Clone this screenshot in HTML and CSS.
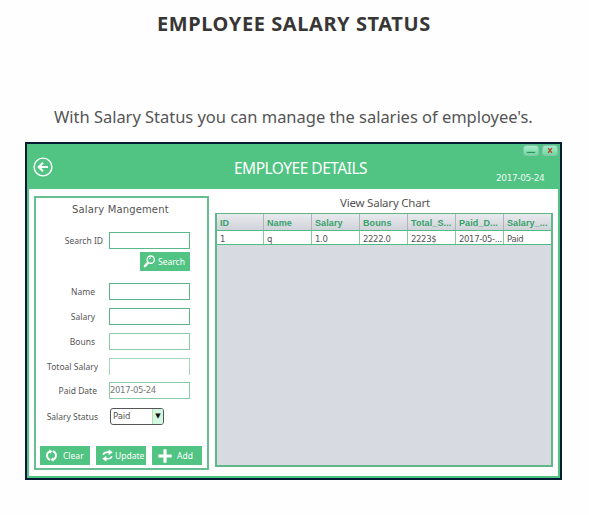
FILE: index.html
```html
<!DOCTYPE html>
<html lang="en">
<head>
<meta charset="utf-8">
<title>Employee Salary Status</title>
<link rel="stylesheet" href="styles.css">
</head>
<body>
<h1><span>EMPLOYEE SALARY STATUS</span></h1>
<p class="intro"><span>With Salary Status you can manage the salaries of employee's.</span></p>
<main class="window">
  <header class="bar">
    <svg class="back" viewBox="0 0 20 20"><circle cx="10" cy="10" r="8.9" fill="none" stroke="#fff" stroke-width="1.4"/><path d="M15 10H6M10 5.8L5.7 10l4.3 4.2" fill="none" stroke="#fff" stroke-width="2"/></svg>
    <h2><span>EMPLOYEE DETAILS</span></h2>
    <div class="side">
      <div class="controls">
        <svg viewBox="0 0 15 9"><path d="M3 6.5h9" stroke="#28764f" stroke-width="1"/></svg>
        <svg viewBox="0 0 15 9"><path d="M5.5 2l4 5M9.5 2l-4 5" stroke="#b8432f" stroke-width="1.5"/></svg>
      </div>
      <div class="date"><span>2017-05-24</span></div>
    </div>
  </header>
  <div class="content">
    <section class="form">
      <h3><span>Salary Mangement</span></h3>
      <div class="row search-row"><label class="l-search"><span>Search ID</span></label><div class="field"></div></div>
      <button class="btn search"><svg viewBox="0 0 14 14"><circle cx="8.3" cy="5" r="3.9" fill="none" stroke="#fff" stroke-width="1.4"/><path d="M6.7 4.6a2 2 0 0 1 1.8-1.6" fill="none" stroke="#fff"/><path d="M5.3 8.5L2 12" stroke="#fff" stroke-width="2.6" stroke-linecap="round"/></svg><span>Search</span></button>
      <div class="row r-name"><label class="l-short"><span>Name</span></label><div class="field"></div></div>
      <div class="row"><label class="l-short"><span>Salary</span></label><div class="field"></div></div>
      <div class="row"><label class="l-short"><span>Bouns</span></label><div class="field light"></div></div>
      <div class="row"><label class="l-long"><span>Totoal Salary</span></label><div class="field open"></div></div>
      <div class="row r-date"><label class="l-date"><span>Paid Date</span></label><div class="field light"><span>2017-05-24</span></div></div>
      <div class="row r-status"><label class="l-long"><span>Salary Status</span></label><div class="select"><span>Paid</span><i>▼</i></div></div>
      <div class="actions">
        <button class="btn"><svg viewBox="0 0 14 14"><path d="M5.6 11.7A4.9 4.9 0 0 1 5.2 2.5M8.4 2.3A4.9 4.9 0 0 1 8.8 11.5" fill="none" stroke="#fff" stroke-width="2"/><path d="M4.6.2L8 2.3 5.4 5zM9.4 13.8L6 11.7 8.6 9z" fill="#fff"/></svg><span>Clear</span></button>
        <button class="btn upd"><svg viewBox="0 0 14 14"><path d="M2.5 6.3C2.8 3.7 5 3.3 9 3.5M11.5 7.8C11.2 10.3 9 10.7 5 10.5" fill="none" stroke="#fff" stroke-width="1.9"/><path d="M8.2.5l4.5 3-4.5 3.2zM5.8 13.5l-4.5-3 4.5-3.2z" fill="#fff"/></svg><span>Update</span></button>
        <button class="btn add"><svg viewBox="0 0 14 14"><path d="M7 .3v13.4M.3 7h13.4" stroke="#fff" stroke-width="3.2"/></svg><span>Add</span></button>
      </div>
    </section>
    <section class="chart">
      <h3><span>View Salary Chart</span></h3>
      <div class="table">
        <div class="tr head"><b>ID</b><b>Name</b><b>Salary</b><b>Bouns</b><b>Total_S...</b><b>Paid_D...</b><b>Salary_...</b></div>
        <div class="tr"><span>1</span><span>q</span><span>1.0</span><span>2222.0</span><span>2223$</span><span>2017-05-...</span><span>Paid</span></div>
      </div>
    </section>
  </div>
</main>
</body>
</html>
```
FILE: styles.css
```css
* { box-sizing: border-box; }
body { margin: 0; height: 515px; overflow: hidden; background: #fefefe; color: #555; font-family: "Noto Sans", sans-serif; }
h1, h2, h3, p { margin: 0; font-weight: 400; white-space: nowrap; }
h1 { height: 48px; padding-left: 157px; font-size: 20px; line-height: 48px; font-weight: 700; color: #383635; letter-spacing: .58px; }
.intro { height: 94px; padding: 56px 0 0 54px; font-size: 16.5px; line-height: 26px; color: #555; letter-spacing: -.03px; }
.window { width: 537px; height: 338px; margin-left: 25px; border: 2px solid #041b33; background: #51c383; padding: 0 2px 2px; display: flex; flex-direction: column; }
.bar { height: 45px; flex: none; display: flex; color: #fff; }
.back { width: 20px; height: 20px; margin: 13px 0 0 4px; }
h2 { margin-left: 181px; font-size: 15.5px; line-height: 49px; width: 134px; letter-spacing: -.5px; }
.side { margin-left: auto; width: 66px; }
.controls { display: flex; gap: 3px; margin: 1px 0 0 31px; width: 35px; }
.controls svg { width: 16px; height: 11px; border-radius: 3px; background: linear-gradient(#a7eacb, #6cdb9d); border: 1px solid #8bbfb0; }
.date { font: 9px/16px "DejaVu Sans", sans-serif; margin: 14px 0 0 4px; letter-spacing: -.4px; white-space: nowrap; color: #e9faef; }
.content { flex: 1; background: #fff; display: flex; padding: 7px 5px 0; }
.form { width: 175px; height: 274px; border: 2px solid #66be91; padding: 0 4px; }
.form h3 { font: 10px/20px "DejaVu Sans", sans-serif; padding: 2px 0 0 32px; height: 34px; letter-spacing: .15px; }
.row { display: flex; height: 17px; margin-bottom: 8px; align-items: center; }
.search-row { margin-bottom: 3px; }
label { width: 69px; flex: none; text-align: right; font-size: 8.5px; line-height: 17px; white-space: nowrap; }
.l-search { padding-right: 6px; }
.l-short { padding-right: 14px; }
.l-long { padding-right: 11px; }
.l-date { padding-right: 12px; }
.field { width: 81px; height: 17px; border: 1px solid #5bb68a; background: #fff; color: #777; font: 8.5px/15px "DejaVu Sans", sans-serif; letter-spacing: -.35px; }
.light { border-color: #8ccbaa; }
.open { border-color: #a3d6bb; border-bottom: 0; }
.btn { display: flex; align-items: center; width: 50px; height: 19px; border: 0; padding: 0 0 0 5px; background: #51c383; color: #fff; font: 8.5px/19px "Noto Sans", sans-serif; white-space: nowrap; }
.btn svg { width: 13px; height: 13px; flex: none; margin-right: 5px; }
.search { margin-left: 100px; padding-left: 3px; }
.search svg { margin-right: 2px; }
.r-name { margin-top: 12px; }
.r-date { margin-top: -1px; }
.r-status { height: 18px; margin-bottom: 21px; margin-top: 8px; }
.select { width: 54px; height: 17px; margin-left: 1px; border: 1px solid #555; border-radius: 3px; display: flex; justify-content: space-between; font: 8.5px/15px "DejaVu Sans", sans-serif; padding-left: 2px; overflow: hidden; letter-spacing: -.1px; }
.select i { width: 11px; background: #d4f8df; border-left: 1px solid #b1dcc0; color: #111; font-style: normal; font-size: 7px; text-align: center; }
.actions { display: flex; gap: 6px; }
.upd svg { margin-right: 1px; }
.upd { padding-left: 5px; }
.add { padding-left: 6px; }
.add svg { width: 14px; height: 14px; }
.chart { width: 338px; margin-left: 6px; flex: none; }
.chart h3 { height: 17px; line-height: 14px; font-size: 11.5px; padding-left: 125px; letter-spacing: -.22px; }
.table { height: 254px; border: 2px solid #60b88a; border-top-width: 1px; background: #d7dae1; }
.tr { display: grid; grid-template-columns: 47px repeat(6, 48px); height: 14px; overflow: hidden; border-bottom: 1px solid #52bd82; background: #fff; width: 334px; font: 8.5px/17px "DejaVu Sans", sans-serif; color: #555; letter-spacing: -.35px; }
.tr > * { border-right: 1px solid #8ac8a5; padding-left: 3px; white-space: nowrap; overflow: hidden; }
.tr.head { height: 17px; background: linear-gradient(#e8eaee, #d0d2da); color: #36a269; font: 700 9px/18px "Liberation Sans", sans-serif; letter-spacing: .1px; }
.tr.head > * { border-right-color: #aeb4b8; }
```
